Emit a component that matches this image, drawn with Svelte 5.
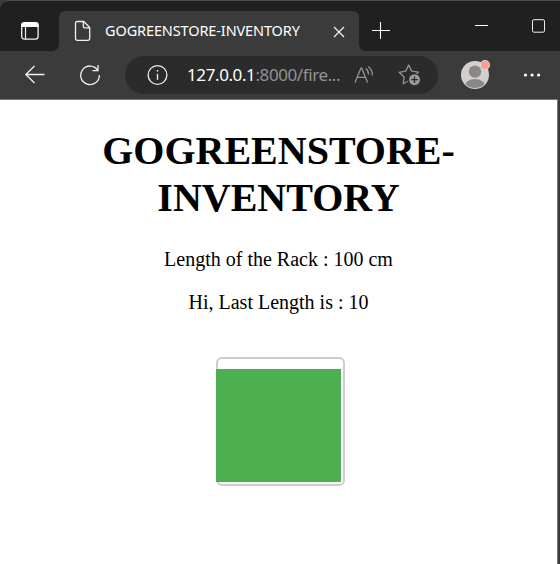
<script>
  const title = 'GOGREENSTORE-INVENTORY';
  const rackLength = 100;
  const lastLength = 10;
</script>

<div class="window">
  <header class="tabs">
    <svg class="workspace" width="20" height="20" viewBox="0 0 20 20">
      <rect x="1.7" y="1.7" width="16.4" height="16.4" rx="2.6" fill="none" stroke="#f2f2f2" stroke-width="1.3" />
      <path d="M1.2 6V4.2a3 3 0 0 1 3-3h11.4a3 3 0 0 1 3 3V6z" fill="#fff" />
      <path d="M5.5 6v12" stroke="#eee" stroke-width="1.2" />
    </svg>
    <div class="tab">
      <svg class="file" width="18" height="22" viewBox="0 0 18 22">
        <path d="M3.3 1.5h6.4l6 6v11a1.8 1.8 0 0 1-1.8 1.8H3.3a1.8 1.8 0 0 1-1.8-1.8V3.3a1.8 1.8 0 0 1 1.8-1.8zM9.3 1.7v4.6a1.6 1.6 0 0 0 1.6 1.6h4.6" fill="none" stroke="#f0f0f0" stroke-width="1.3" />
      </svg>
      <span class="name">{title}</span>
      <svg class="close" width="12" height="12" viewBox="0 0 12 12"><path d="M1 1l10 10M11 1L1 11" stroke="#f4f4f4" stroke-width="1.2" /></svg>
    </div>
    <svg class="plus" width="18" height="18" viewBox="0 0 18 18"><path d="M0 9.5h18M8.5 1v17" stroke="#fff" stroke-width="1.1" /></svg>
    <svg class="min" width="13" height="3" viewBox="0 0 13 3"><path d="M0 1.5h13" stroke="#fff" /></svg>
    <svg class="max" width="13" height="14" viewBox="0 0 13 14"><rect x=".5" y=".7" width="12" height="12.5" rx="1.4" fill="none" stroke="#eee" /></svg>
  </header>

  <nav class="toolbar">
    <svg class="back" width="22" height="20" viewBox="0 0 22 20"><path d="M20.5 9.5H2M10.5 1L1.8 9.5l8.7 8.5" fill="none" stroke="#f2f2f2" stroke-width="1.3" /></svg>
    <svg class="reload" width="22" height="22" viewBox="0 0 22 22"><path d="M18.9 6.4A9.3 9.3 0 1 0 20.3 11M19 1v5.6h-5.6" fill="none" stroke="#f0f0f0" stroke-width="1.3" /></svg>
    <div class="address">
      <svg class="info" width="22" height="22" viewBox="0 0 22 22">
        <circle cx="11.5" cy="11" r="9.4" fill="none" stroke="#eee" stroke-width="1.3" />
        <path d="M11.5 9.8v6" stroke="#eee" stroke-width="1.3" /><circle cx="11.5" cy="6.8" r=".9" fill="#eee" />
      </svg>
      <span class="url"><b>127.0.0.1</b>:8000/fire...</span>
      <svg class="read" width="22" height="20" viewBox="0 0 22 20">
        <path d="M1 17.4L6.9 3.2h.8l5.9 14.2M3.2 12.4h8.2M11.7 3.5q3 2.2 2.8 6.1M14.3 1.4q4.2 3.3 4 9" fill="none" stroke="#929292" stroke-width="1.3" />
      </svg>
      <svg class="star" width="24" height="24" viewBox="0 0 24 24">
        <path d="M9.8 20.2l-4.6 2.5.9-6.7-5-4.7 6.6-1.2L10.7 4l3 6.1 6.8 1-1.8 1.9" transform="translate(0 -2)" fill="none" stroke="#929292" stroke-width="1.3" stroke-linejoin="round" />
        <circle cx="16.5" cy="16.7" r="5.5" fill="#9b9b9b" />
        <path d="M13.2 16.7h6.6M16.5 13.4V20" stroke="#2b2b2b" stroke-width="1.3" />
      </svg>
    </div>
    <svg class="avatar" width="31" height="31" viewBox="0 0 31 31">
      <defs><clipPath id="face"><circle cx="15" cy="16" r="13" /></clipPath></defs>
      <circle cx="15" cy="16" r="14" fill="#d2d0ce" />
      <g clip-path="url(#face)"><circle cx="15" cy="12.6" r="6.2" fill="#8a8785" /><ellipse cx="15" cy="27.6" rx="10.4" ry="7.6" fill="#8a8785" /></g>
      <circle cx="25" cy="6" r="5" fill="#ddd8d5" /><circle cx="25" cy="6" r="4" fill="#ff9d95" />
    </svg>
    <svg class="dots" width="18" height="4" viewBox="0 0 18 4"><circle cx="2.5" cy="2" r="1.6" fill="#fff" /><circle cx="9.1" cy="2" r="1.6" fill="#fff" /><circle cx="15.6" cy="2" r="1.6" fill="#fff" /></svg>
  </nav>

  <main>
    <h1>{title}</h1>
    <p>Length of the Rack : {rackLength} cm</p>
    <p>Hi, Last Length is : {lastLength}</p>
    <div class="rack"><div class="fill"></div></div>
  </main>
</div>

<style>
  :global(body) { margin: 0; background: #3b3b3b; }
  .window { width: 560px; height: 564px; overflow: hidden; display: flex; flex-direction: column; box-sizing: border-box; background: #3b3b3b; font-family: "Noto Sans", "Open Sans", sans-serif; }
  svg { display: block; flex: none; }
  .tabs { height: 51px; flex: none; box-sizing: border-box; display: flex; align-items: flex-start; border-top: 1px solid #4c4c4c; border-top-left-radius: 9px; background: #202020; }
  .workspace { margin: 20px 0 0 20px; }
  .tab { position: relative; display: flex; align-items: center; width: 300px; height: 40px; box-sizing: border-box; margin: 10px 0 0 19px; padding-left: 15px; border-radius: 6px 6px 0 0; background: #3b3b3b; }
  .tab::before, .tab::after { content: ""; position: absolute; bottom: 0; width: 6px; height: 6px; }
  .tab::before { left: -6px; background: radial-gradient(circle at 0 0, transparent 5.5px, #3b3b3b 6px); }
  .tab::after { right: -6px; background: radial-gradient(circle at 100% 0, transparent 5.5px, #3b3b3b 6px); }
  .name { width: 196px; margin: 0 0 2px 13px; color: #fff; font-size: 14.5px; line-height: 20px; letter-spacing: -0.12px; white-space: nowrap; }
  .close { margin: 2px 0 0 32px; }
  .plus { margin: 20px 0 0 13px; }
  .min { margin: 23px 0 0 85px; }
  .max { margin: 18px 0 0 44px; }
  .toolbar { height: 48px; flex: none; display: flex; align-items: center; background: #3b3b3b; }
  .back { margin-left: 24px; }
  .reload { margin-left: 33px; }
  .address { display: flex; align-items: center; width: 313px; height: 38px; margin-left: 24px; border-radius: 19px; background: #2b2b2b; }
  .info { margin-left: 21px; }
  .url { width: 155px; margin-left: 19px; color: #929292; font-size: 17px; line-height: 24px; letter-spacing: -0.4px; white-space: nowrap; }
  .url b { color: #fff; font-weight: 400; }
  .read { margin-left: 12px; }
  .star { margin-left: 22px; }
  .avatar { margin: -2px 0 0 22px; }
  .dots { margin-left: 32px; }
  main { flex: 1; width: 558px; box-sizing: border-box; padding-top: 27px; border-top: 1px solid #777; border-right: 1px solid #777; background: #fff; color: #000; font-family: "Liberation Serif", serif; text-align: center; }
  h1 { width: 440px; margin: 0 auto 27px; font-size: 40px; line-height: 47px; font-weight: 700; }
  p { margin: 0 0 20px; font-size: 20px; line-height: 23px; }
  .rack { width: 129px; height: 129px; box-sizing: border-box; margin: 43px 0 0 216px; padding-top: 10px; border: 2px solid #ccc; border-radius: 6px; }
  .fill { width: 125px; height: 113px; margin-left: -2px; background: #4caf50; }
</style>
